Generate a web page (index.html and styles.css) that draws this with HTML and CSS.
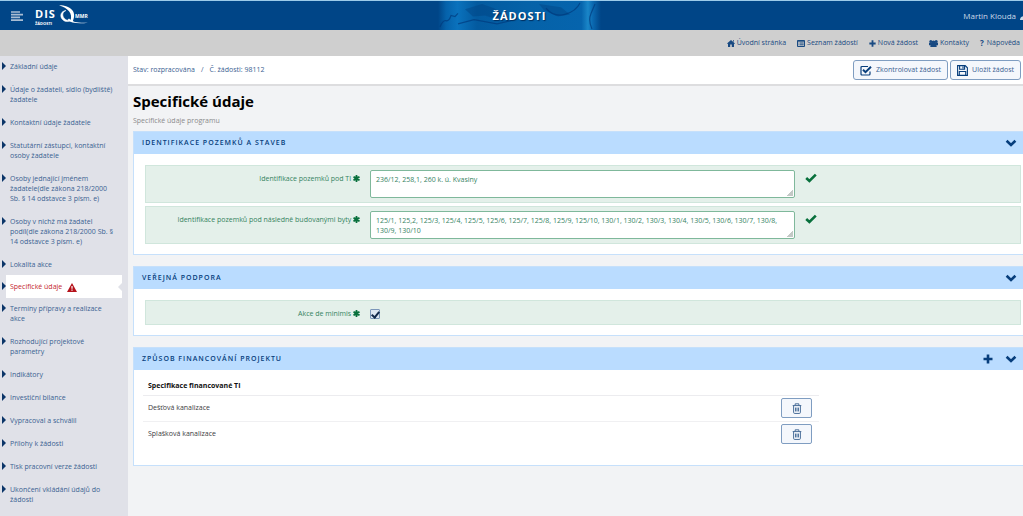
FILE: index.html
```html
<!DOCTYPE html>
<html lang="cs">
<head>
<meta charset="utf-8">
<title>DIS Žádosti – Specifické údaje</title>
<link rel="stylesheet" href="styles.css">
</head>
<body>
<svg class="defs" aria-hidden="true">
  <symbol id="chevron" viewBox="0 0 12 8"><path d="M1.6 1.8 6 6 10.400 1.800" fill="none" stroke="currentColor" stroke-width="2.600"/></symbol>
  <symbol id="check" viewBox="0 0 12 10"><path d="M1.200 5 4.400 8 10.800 1.600" fill="none" stroke="currentColor" stroke-width="2.600"/></symbol>
  <symbol id="plus" viewBox="0 0 10 10"><path d="M5 .5v9M.5 5h9" fill="none" stroke="currentColor" stroke-width="2.600"/></symbol>
  <symbol id="star" viewBox="0 0 10 10"><path d="M5 1.200v7.600M1.700 3.100l6.600 3.800M8.300 3.100 1.700 6.900" fill="none" stroke="currentColor" stroke-width="2.700" stroke-linecap="round"/></symbol>
  <symbol id="trash" viewBox="0 0 10 12"><path d="M.3 2.800h9.400M3 2.500V.9h4v1.600M1.300 3v7.200q0 1.200 1.200 1.200h5q1.200 0 1.200-1.200V3M3.400 5v4.200M5 5v4.200M6.600 5v4.200" fill="none" stroke="currentColor"/></symbol>
</svg>

<header class="topbar">
  <div class="brand">
    <button class="menu-toggle" type="button" aria-label="Menu">
      <svg viewBox="0 0 12 10" width="12" height="10"><path d="M0 1h9M0 3.700h12M0 6.400h9M0 9.100h12" stroke="#a9bdd3" stroke-width="1.700"/></svg>
    </button>
    <a class="logo" href="#" aria-label="DIS Žádosti MMR">
      <svg viewBox="0 0 54 21" width="54" height="21">
        <text x="0" y="13" class="logo-main">DIS</text>
        <text x="0" y="20" class="logo-sub">ŽÁDOSTI</text>
        <path d="M31 5.500c-5 .5-6.500 5-4 8.500 2.500 3.200 7 3.500 10 .5-3 1.500-6 1-8-1.500-2-2.800-1.500-6 2-7.500z" fill="#fff" stroke="#fff" stroke-width=".5"/>
        <path d="M24 .3C36 .5 42.500 7 37.500 17l-2-1.500C38 8.500 33 3 24 .3z" fill="#fff"/>
        <path d="M34 13.500c4 4 9 4.500 19 4.200-9 1.200-17 .6-20.500-2.700z" fill="#fff"/>
        <text x="40" y="13" class="logo-org">MMR</text>
      </svg>
    </a>
  </div>
  <div class="banner">
    <svg class="banner-art" viewBox="0 0 163 28" preserveAspectRatio="none" aria-hidden="true">
      <defs>
        <linearGradient id="sea"><stop offset="0" stop-color="#004587"/><stop offset=".05" stop-color="#0562ab"/><stop offset=".12" stop-color="#0a72bd"/><stop offset=".24" stop-color="#035a9f"/><stop offset=".55" stop-color="#0562a8"/><stop offset=".88" stop-color="#0664ad"/><stop offset=".92" stop-color="#1a86c8"/><stop offset=".95" stop-color="#0a68b0"/><stop offset="1" stop-color="#004587"/></linearGradient>
      </defs>
      <path d="M0 0h163v28H0z" fill="url(#sea)"/>
      <path d="M27 8l17-5 12 4 14 8-10 3-13-4-12 1zM101 3l22 3 9 7-12 2-14-6z" fill="#003f7d" opacity=".4"/>
      <path d="M2 25q3-7 6-6t5-5l4 1 3-3M108 7q8 9 19 6t15-11M154 27q-4-8-1-15l4-9M20 22l16-4 23 4 14-3" fill="none" stroke="#003b7d" stroke-width="1.200" opacity=".7"/>
    </svg>
    <span class="banner-title">ŽÁDOSTI</span>
  </div>
  <div class="user">Martin Klouda
    <svg viewBox="0 0 8 8" width="8" height="8"><circle cx="5" cy="2.500" r="2" fill="#cbd9e8"/><path d="M0 8q0-4 5-4t5 4z" fill="#cbd9e8"/></svg>
  </div>
</header>

<nav class="toolbar" aria-label="Hlavní nabídka">
  <a href="#"><svg viewBox="0 0 8 7" width="8" height="7"><path d="M4 0 8 3.500 7 4v3H4.800V4.600H3.200V7H1V4L0 3.500zM6 .3h1V2L6 1z" fill="currentColor"/></svg>Úvodní stránka</a>
  <a href="#"><svg viewBox="0 0 8 7" width="8" height="7"><path d="M.5.500h7v6h-7zM.5 1.200h7M1.500 3h1M3 3h3.700M1.500 4.800h1M3 4.800h3.700" fill="none" stroke="currentColor"/></svg>Seznam žádostí</a>
  <a href="#"><svg width="7" height="7"><use href="#plus"/></svg>Nová žádost</a>
  <a href="#"><svg viewBox="0 0 9 7" width="9" height="7"><g fill="currentColor"><circle cx="1.800" cy="1.500" r="1.500"/><circle cx="7.200" cy="1.500" r="1.500"/><circle cx="4.500" cy="2.500" r="1.900"/><path d="M0 5.200V2.800h3v2.400zM6 2.800h3v2.400H6zM1.300 7q0-3.500 3.200-3.500T7.700 7z"/></g></svg>Kontakty</a>
  <a href="#"><b>?</b>Nápověda</a>
</nav>

<div class="layout">
  <aside class="sidebar">
    <ul class="steps">
      <li><a href="#">Základní údaje</a></li>
      <li><a href="#">Údaje o žadateli, sídlo (bydliště) žadatele</a></li>
      <li><a href="#">Kontaktní údaje žadatele</a></li>
      <li><a href="#">Statutární zástupci, kontaktní osoby žadatele</a></li>
      <li><a href="#">Osoby jednající jménem žadatele(dle zákona 218/2000 Sb. § 14 odstavce 3 písm. e)</a></li>
      <li><a href="#">Osoby v nichž má žadatel podíl(dle zákona 218/2000 Sb. § 14 odstavce 3 písm. e)</a></li>
      <li><a href="#">Lokalita akce</a></li>
      <li class="active"><a href="#" aria-current="page">Specifické údaje<svg class="warn" viewBox="0 0 10 9" width="10" height="9"><path d="M5 0 10 9H0z" fill="#b5121b"/><path d="M5 3v2.800M5 6.600v1.200" stroke="#fff" stroke-width="1.200"/></svg></a></li>
      <li><a href="#">Termíny přípravy a realizace akce</a></li>
      <li><a href="#">Rozhodující projektové parametry</a></li>
      <li><a href="#">Indikátory</a></li>
      <li><a href="#">Investiční bilance</a></li>
      <li><a href="#">Vypracoval a schválil</a></li>
      <li><a href="#">Přílohy k žádosti</a></li>
      <li><a href="#">Tisk pracovní verze žádosti</a></li>
      <li><a href="#">Ukončení vkládání údajů do žádosti</a></li>
    </ul>
  </aside>

  <div class="main">
    <div class="status">
      <div class="crumbs"><span>Stav: rozpracována</span><span>/</span><span>Č. žádosti: 98112</span></div>
      <div class="actions">
        <button type="button"><svg viewBox="0 0 12 11" width="12" height="11"><path d="M10 6.500V9q0 1-1 1H2q-1 0-1-1V2.500q0-1 1-1h6" fill="none" stroke="currentColor" stroke-width="1.200"/><path d="M3 4.800 5.500 7.200 11 1.800" fill="none" stroke="currentColor" stroke-width="2"/></svg>Zkontrolovat žádost</button>
        <button type="button"><svg viewBox="0 0 11 11" width="11" height="11"><path d="M.6.600h7.600l2.200 2.200v7.600H.6zM2.600.600v3.600h5V.6M2.300 10.400V6.500h6.400v3.900M6 1.400v2" fill="none" stroke="currentColor" stroke-width="1.100"/></svg>Uložit žádost</button>
      </div>
    </div>

    <main class="content">
      <h1>Specifické údaje</h1>
      <p class="subtitle">Specifické údaje programu</p>

      <section class="panel">
        <div class="panel-head"><h2>Identifikace pozemků a staveb</h2>
          <button type="button" aria-label="Sbalit"><svg width="12" height="8"><use href="#chevron"/></svg></button></div>
        <div class="panel-body">
          <div class="field">
            <label for="ti">Identifikace pozemků pod TI <svg width="7" height="7"><use href="#star"/></svg></label>
            <textarea id="ti" rows="2" spellcheck="false">236/12, 258,1, 260 k. ú. Kvasiny</textarea>
            <svg class="valid" width="12" height="10"><use href="#check"/></svg>
          </div>
          <div class="field">
            <label for="byty">Identifikace pozemků pod následně budovanými byty <svg width="7" height="7"><use href="#star"/></svg></label>
            <textarea id="byty" rows="2" spellcheck="false">125/1, 125,2, 125/3, 125/4, 125/5, 125/6, 125/7, 125/8, 125/9, 125/10, 130/1, 130/2, 130/3, 130/4, 130/5, 130/6, 130/7, 130/8, 130/9, 130/10</textarea>
            <svg class="valid" width="12" height="10"><use href="#check"/></svg>
          </div>
        </div>
      </section>

      <section class="panel">
        <div class="panel-head"><h2>Veřejná podpora</h2>
          <button type="button" aria-label="Sbalit"><svg width="12" height="8"><use href="#chevron"/></svg></button></div>
        <div class="panel-body">
          <div class="field field-check">
            <label for="minimis">Akce de minimis <svg width="7" height="7"><use href="#star"/></svg></label>
            <input type="checkbox" id="minimis" checked>
          </div>
        </div>
      </section>

      <section class="panel">
        <div class="panel-head"><h2>Způsob financování projektu</h2>
          <button type="button" aria-label="Přidat"><svg width="10" height="10"><use href="#plus"/></svg></button>
          <button type="button" aria-label="Sbalit"><svg width="12" height="8"><use href="#chevron"/></svg></button></div>
        <div class="table-wrap">
          <table>
            <thead><tr><th>Specifikace financované TI</th><td></td></tr></thead>
            <tbody>
              <tr><td>Dešťová kanalizace</td><td><button class="delete" type="button" aria-label="Smazat"><svg width="10" height="11"><use href="#trash"/></svg></button></td></tr>
              <tr><td>Splašková kanalizace</td><td><button class="delete" type="button" aria-label="Smazat"><svg width="10" height="11"><use href="#trash"/></svg></button></td></tr>
            </tbody>
          </table>
        </div>
      </section>
    </main>
  </div>
</div>
</body>
</html>
```
FILE: styles.css
```css
* { box-sizing: border-box; }
body {
  margin: 0;
  min-height: 100vh;
  display: flex;
  flex-direction: column;
  overflow-x: hidden;
  background: #f2f3f5;
  color: #3a6192;
  font: 7px/10px "Open Sans", "Noto Sans", sans-serif;
}
a { color: inherit; text-decoration: none; }
button { font: inherit; color: inherit; cursor: pointer; }
svg { flex: none; }
.defs { position: absolute; width: 0; height: 0; }

.topbar {
  display: grid;
  grid-template-columns: 438fr 163px 422fr;
  height: 30px;
  border-top: 1px solid #9ccbea;
  background: #004587;
}
.brand { display: flex; align-items: center; gap: 12px; padding-left: 11px; }
.menu-toggle { display: flex; padding: 0; border: 0; background: none; }
.logo { display: flex; }
.logo-main { font: 700 11px "Open Sans", sans-serif; fill: #fff; letter-spacing: 1px; }
.logo-sub { font: 700 4px "Open Sans", sans-serif; fill: #fff; }
.logo-org { font: 700 5px "Open Sans", sans-serif; fill: #fff; }
.banner { position: relative; display: grid; place-items: center; }
.banner-art { position: absolute; inset: 0; width: 100%; height: 100%; }
.banner-title {
  position: relative;
  color: #fff;
  font-size: 11px;
  font-weight: 700;
  letter-spacing: 1px;
  text-shadow: 1px 1px 1px #002c5c;
}
.user {
  display: flex;
  align-items: center;
  justify-content: flex-end;
  gap: 4px;
  margin-right: -5px;
  color: #cbd9e8;
  font-size: 8px;
}

.toolbar {
  display: flex;
  align-items: center;
  justify-content: flex-end;
  gap: 11px;
  height: 26px;
  padding-right: 3px;
  background: #cfcfcf;
  color: #194a82;
}
.toolbar a { display: flex; align-items: center; gap: 2px; }
.toolbar b { margin-right: 1px; font-size: 8px; }

.layout { flex: 1; display: flex; }
.sidebar { flex: none; width: 128px; padding: 0 6px 0 2px; background: #e0e1e8; }
.steps { list-style: none; margin: -1px 0 0; padding: 0; }
.steps li { display: flex; }
.steps li::before {
  content: "";
  width: 0;
  height: 0;
  margin-top: 7px;
  border: solid transparent;
  border-width: 4px 0 4px 4px;
  border-left-color: #0b3568;
}
.steps a { flex: 1; padding: 7px 4px 6px 4px; }
.steps .active { position: relative; margin: -1px 0; }
.active a { display: flex; align-items: center; gap: 5px; background: #fff; color: #c4272e; }
.active::after {
  content: "";
  position: absolute;
  top: 8px;
  right: 0;
  border: solid transparent;
  border-width: 4px 4px 4px 0;
  border-right-color: #e0e1e8;
}

.main { flex: 1; min-width: 0; }
.status {
  display: flex;
  align-items: center;
  justify-content: space-between;
  height: 30px;
  padding: 0 2px 0 5px;
  border-bottom: 2px solid #dddddf;
  background: #fff;
}
.crumbs { display: flex; gap: 6px; }
.actions { display: flex; gap: 2px; }
.actions button {
  display: flex;
  align-items: center;
  gap: 4px;
  height: 20px;
  padding: 0 6px;
  border: 1px solid #7f9dc1;
  border-radius: 3px;
  background: #f4f7fc;
}
.actions svg { color: #073e7c; }

.content { padding: 5px 0 10px 5px; }
h1 { margin: 0; color: #000; font-size: 15px; line-height: 20px; }
.subtitle { margin: 5px 0; color: #8a8a8c; }

.panel { margin-bottom: 11px; border: 1px solid #c6e0fb; border-right: 0; background: #fff; }
.panel-head {
  display: flex;
  align-items: center;
  gap: 12px;
  height: 22px;
  padding: 0 6px 0 8px;
  background: #badcff;
  color: #073e7c;
}
h2 {
  flex: 1;
  margin: 0;
  font-size: 7px;
  line-height: 10px;
  font-weight: 600;
  letter-spacing: 1px;
  text-transform: uppercase;
}
.panel-head button { display: flex; padding: 0; border: 0; background: none; }
.panel-body { display: grid; gap: 3px; padding: 11px 2px 10px 11px; }
.field {
  display: grid;
  grid-template-columns: 214fr 425fr 215fr;
  align-items: start;
  gap: 10px;
  padding: 4px 0;
  border: 1px solid #d0e6dc;
  background: #e4f0ea;
  color: #35835f;
}
.field label { padding-top: 4px; text-align: right; }
.field label svg { vertical-align: -1px; color: #08703c; }
textarea {
  width: 100%;
  height: 28px;
  padding: 4px 5px;
  border: 1px solid #7fb89b;
  border-radius: 2px;
  background: #fff;
  color: inherit;
  font: inherit;
  resize: none;
  overflow: hidden;
}
.valid { margin-top: 3px; color: #08703c; }
.field-check { padding: 4px 0 5px; }
input[type="checkbox"] {
  appearance: none;
  display: grid;
  place-items: center;
  width: 10px;
  height: 10px;
  margin: 4px 0 0;
  border: 1px solid #7c97b9;
  border-radius: 1px;
  background: #dde6f1;
}
input[type="checkbox"]:checked::after {
  content: "";
  width: 3px;
  height: 6px;
  border: solid #12294a;
  border-width: 0 2px 2px 0;
  transform: rotate(40deg);
}
textarea {
  background: linear-gradient(135deg, transparent 50%, #c3c9c6 50%) right 1px bottom 1px / 6px 6px no-repeat #fff;
}

.table-wrap { padding: 7px 2px 18px 9px; }
table { width: 77%; border-collapse: collapse; color: #3c3c3e; }
th, td { height: 26px; padding: 0 5px; text-align: left; }
th, thead td { height: 18px; color: #111; border-bottom: 1px solid #ececef; }
tbody tr + tr { border-top: 1px solid #f0f0f2; }
td:last-child { width: 43px; }
.delete {
  display: grid;
  place-items: center;
  width: 31px;
  height: 20px;
  padding: 0;
  border: 1px solid #7f9dc1;
  border-radius: 2px;
  background: #f4f7fc;
  color: #3b6291;
}
```
